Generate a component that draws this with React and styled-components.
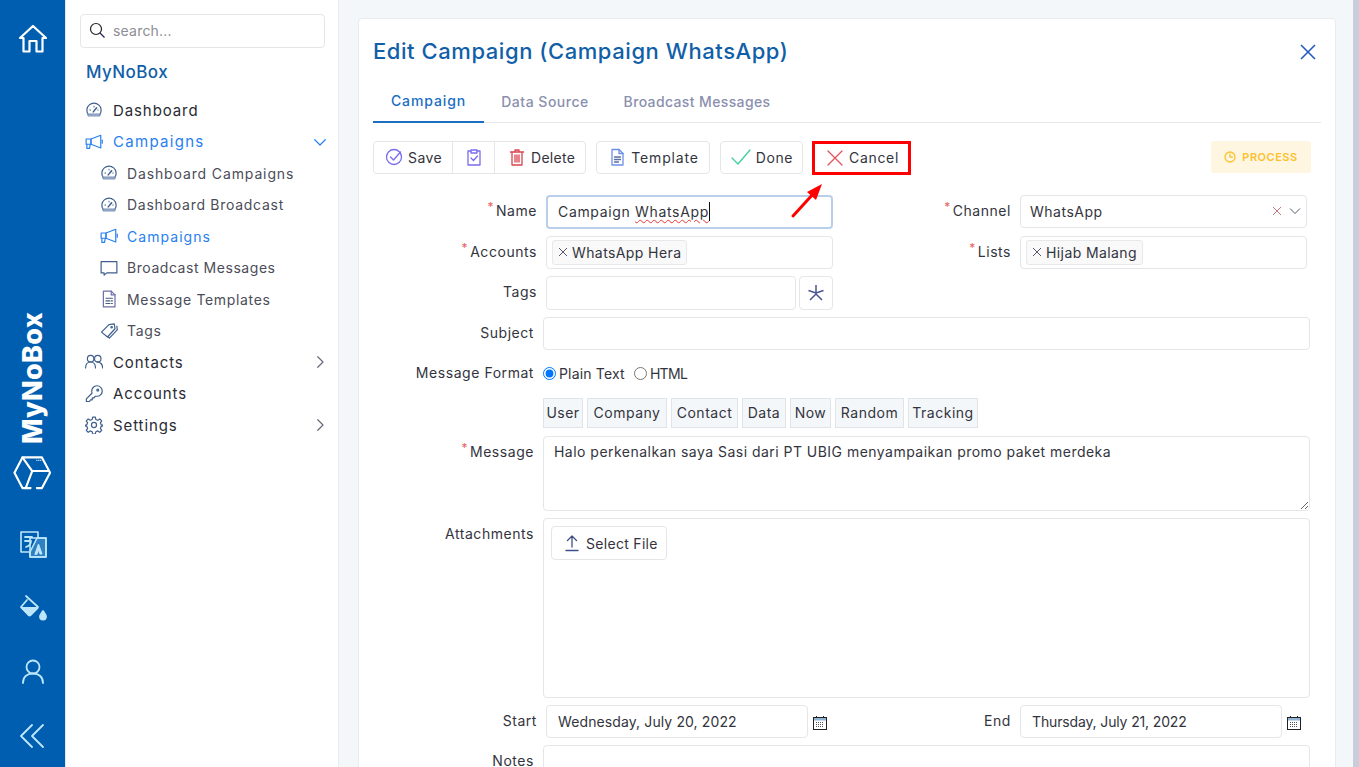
import React from "react";
import styled, { createGlobalStyle } from "styled-components";

const Global = createGlobalStyle`
  html, body { margin: 0; height: 767px; overflow: hidden; }
  body { font-family: Inter, "Open Sans", sans-serif; color: #2c2c33; background: #f4f7fa; }
  * { box-sizing: border-box; }
`;

const Page = styled.div`display: flex; width: 1359px; height: 767px; overflow: hidden;`;

const Rail = styled.nav`
  width: 66px; flex: none; background: #005eb0; border-right: 1px solid #e3e7ec;
  display: flex; flex-direction: column; align-items: center; padding: 23px 0 15px;
`;
const RailBrand = styled.div`
  margin-top: auto; display: flex; flex-direction: column; align-items: center; gap: 11px; margin-bottom: 37px;
`;
const BrandText = styled.div`
  writing-mode: vertical-rl; transform: rotate(180deg); color: #fff; font-weight: 800; font-size: 27px; line-height: 1; letter-spacing: .3px; height: 131px; text-align: left;
`;
const RailTools = styled.div`display: flex; flex-direction: column; align-items: center; gap: 32px;`;
const RailIcon = styled.svg`
  width: ${p => p.$w || 32}px; height: ${p => p.$h || 32}px; display: block; fill: none; stroke: ${p => p.$c || "#bde6fb"}; stroke-width: ${p => p.$sw || 1.8}; stroke-linecap: round; stroke-linejoin: round;
`;

const Side = styled.aside`
  width: 273px; flex: none; background: #fff; padding: 14px 0 0 14px; border-right: 1px solid #e9edf2;
`;
const Search = styled.div`
  height: 34px; border: 1px solid #e4e6e9; border-radius: 4px; display: flex; align-items: center; gap: 7px; padding: 0 0 2px 7px; color: #8d8d93; font-size: 14px; letter-spacing: .2px; width: 245px;
`;
const Brand = styled.div`color: #115fa8; font-size: 17px; font-weight: 500; letter-spacing: .42px; margin: 13px 0 12px 6px; line-height: 22px;`;
const Menu = styled.div`display: flex; flex-direction: column; width: 249px;`;
const Item = styled.div`
  height: 31.5px; display: flex; align-items: center; gap: ${p => p.$sub ? 9 : 10}px; padding-left: ${p => p.$sub ? 20 : 5}px; padding-bottom: 1px;
  font-size: ${p => p.$sub ? 14 : 15}px; letter-spacing: ${p => p.$ls ?? (p.$sub ? .66 : .9)}px; color: ${p => p.$active ? "#2880f0" : p.$sub ? "#4b4d58" : "#2a2b33"}; font-weight: 400;
`;
const ItemIcon = styled.svg`
  width: 18px; height: 18px; flex: none; fill: none; stroke: ${p => p.$c || "#3f5f8c"}; stroke-width: 1.6; stroke-linecap: round; stroke-linejoin: round;
`;
const ItemLabel = styled.span`flex: 1; white-space: nowrap;`;

const Main = styled.main`flex: 1; min-width: 0; padding: 18px 17px 0 19px;`;
const Scrollbar = styled.div`width: 6px; flex: none; background: #c8ced9;`;
const Card = styled.section`
  background: #fff; border: 1px solid #e8ebef; border-radius: 4px; padding: 0 14px; height: 780px;
`;
const TitleRow = styled.header`display: flex; justify-content: space-between; align-items: center; height: 65px; padding: 0 4px 2px 0;`;
const Title = styled.h1`margin: 0; font-size: 22px; line-height: 28px; font-weight: 500; color: #115fa8; letter-spacing: .56px;`;
const CloseIcon = styled.svg`width: 18px; height: 18px; margin-top: 2px; fill: none; stroke: #1f55c4; stroke-width: 1.5;`;
const Tabs = styled.div`display: flex; border-bottom: 1px solid #e6e8eb; height: 39px; width: 948px;`;
const Tab = styled.div`
  width: ${p => p.$w}px; height: 39px; display: flex; align-items: center; justify-content: center; font-size: 14px; font-weight: 500; letter-spacing: ${p => p.$ls}px; padding-bottom: 4px; white-space: nowrap;
  color: ${p => p.$active ? "#1b6ec2" : "#8b8fae"}; border-bottom: ${p => p.$active ? "2px solid #1b6ec2" : "none"};
`;
const Toolbar = styled.div`display: flex; align-items: flex-start; margin-top: 18px; height: 34px; position: relative; width: 938px;`;
const Group = styled.div`display: flex; height: 33px; border: 1px solid #e4e6ea; border-radius: 4px;`;
const GroupBtn = styled.div`
  display: flex; align-items: center; gap: 5px; padding: 0 ${p => p.$pr ?? 10}px 1px ${p => p.$pl ?? 11}px; font-size: 14px; letter-spacing: ${p => p.$ls ?? .4}px; color: #33343d; white-space: nowrap;
  & + & { border-left: 1px solid #e4e6ea; }
`;
const ToolBtn = styled(Group)`margin-left: ${p => p.$ml ?? 10}px;`;
const BtnIcon = styled.svg`
  width: ${p => p.$s || 18}px; height: ${p => p.$s || 18}px; flex: none; fill: none; stroke: ${p => p.$c}; stroke-width: 1.3; stroke-linecap: round; stroke-linejoin: round;
`;
const CancelBtn = styled.div`
  margin-left: 9px; height: 34px; width: 99px; flex: none; border: 3px solid #f00; display: flex; align-items: center; gap: 5px; padding: 0 0 1px 11px; font-size: 14px; letter-spacing: .68px; color: #33343d;
`;
const Status = styled.div`
  margin-left: auto; height: 32px; width: 100px; border-radius: 3px; background: #fff6e1; color: #fcc12f; font-size: 11px; font-weight: 600; letter-spacing: .5px; display: flex; align-items: center; justify-content: center; gap: 6px;
`;
const Arrow = styled.svg`position: absolute; left: 417px; top: 40px; width: 36px; height: 38px; fill: #f00; stroke: #f00;`;

const Form = styled.div`display: flex; flex-direction: column; margin-top: 20px; width: 948px;`;
const Row = styled.div`
  display: grid; align-items: start; margin-bottom: ${p => p.$mb ?? 7}px;
  grid-template-columns: ${p => p.$wide ? "170px 767px" : "173px 287px 187px 287px"};
`;
const Label = styled.label`
  text-align: right; padding-right: 9px; font-size: 14px; letter-spacing: .55px; color: #33343d; line-height: 20px; padding-top: ${p => p.$pt ?? 6}px; white-space: nowrap;
`;
const Req = styled.sup`color: #e8605f; font-size: 12px; line-height: 0; margin-right: 2px; position: relative; top: 1px; vertical-align: super;`;
const Box = styled.div`
  height: ${p => p.$h || 33}px; width: ${p => p.$w ? p.$w + "px" : "auto"}; border: 1px solid #e4e6ea; border-radius: 4px; background: #fff; display: flex; align-items: center; font-size: 14px; letter-spacing: ${p => p.$ls ?? .5}px; color: #33343d; padding: 0 ${p => p.$pr ?? p.$px ?? 9}px 1px ${p => p.$px ?? 9}px; flex: ${p => p.$w ? "none" : 1}; min-width: 0; white-space: nowrap;
`;
const Focused = styled(Box)`height: 34px; border: 2px solid #b9cfe9; padding-left: 10px; letter-spacing: .66px;`;
const Caret = styled.span`display: inline-block; width: 1px; height: 19px; background: #111;`;
const Squiggle = styled.span`text-decoration: underline wavy #e33 1px; text-underline-offset: 2px;`;
const Chip = styled.div`
  height: 25px; background: #f9f9f9; border: 1px solid #e8e8ea; border-radius: 3px; display: flex; align-items: center; gap: 3px; padding: 0 5px 0 4px; font-size: 14px; letter-spacing: .4px;
`;
const SmallX = styled.svg`width: 12px; height: 12px; flex: none; fill: none; stroke: ${p => p.$c || "#55586a"}; stroke-width: 1;`;
const Spacer = styled.span`flex: 1;`;
const IconGap = styled.span`width: 6px; flex: none;`;
const Split = styled.div`display: flex; gap: 3px; align-items: flex-start;`;
const Square = styled(Box)`flex: none; width: 34px; height: 34px; padding: 0; justify-content: center;`;
const Radios = styled.div`display: flex; align-items: center; height: 20px; font-size: 14px; letter-spacing: .18px; color: #33343d;`;
const Radio = styled.input`margin: 0 3px 0 0; width: 13px; height: 13px;`;
const RadioText = styled.span`margin-right: 9px; letter-spacing: ${p => p.$ls ?? .18}px;`;
const Tokens = styled.div`display: flex; gap: 4px;`;
const Token = styled.div`width: ${p => p.$w}px; height: 30px; background: #f4f7fa; border: 1px solid #e0e3e8; display: flex; align-items: center; justify-content: center; padding-bottom: 1px; font-size: 14px; letter-spacing: .5px; color: #33343d; white-space: nowrap;`;
const MessageArea = styled.textarea`
  display: block; width: 767px; height: 75px; border: 1px solid #e4e6ea; border-radius: 4px; padding: 5px 10px; font: 14px/20px Inter, sans-serif; letter-spacing: .47px; color: #33343d; outline: none; background: #fff;
`;
const Attach = styled.div`width: 767px; height: 180px; border: 1px solid #e4e6ea; border-radius: 4px; padding: 7px;`;
const FileBtn = styled.div`width: 116px; height: 34px; border: 1px solid #e4e6ea; border-radius: 4px; display: flex; align-items: center; gap: 5px; padding: 0 0 0 11px; font-size: 14px; letter-spacing: .3px; color: #33343d;`;
const DateCell = styled.div`display: flex; align-items: center; gap: 4px;`;
const CalIcon = styled.svg`width: 16px; height: 16px; flex: none; margin-top: 2px;`;

const gauge = <>
  <path d="M4 17.500a9.500 9.500 0 1 1 16 0"/>
  <path d="M3.500 17.500h17l-1 2.500h-15z" fill="#a9bad4" stroke="#7d93b8"/>
  <path d="M11 14.500 15.500 9" strokeWidth="2"/>
  <path d="M6.500 12h1M12 7v1M17 12h.6" strokeWidth="1.300"/>
</>;
const mega = <>
  <path d="M8 8 21 3v17L8 15z"/>
  <path d="M1.500 8H8v7H1.500z"/>
  <path d="M2.500 15v5.500H6l1-5.500"/>
  <path d="M23 9.500v4"/>
</>;
const msg = <path d="M1.500 3.500h21v15H9l-3.500 3v-3h-4z"/>;
const doc = <>
  <path d="M4.500 1.500H15l5 5v16H4.500z" stroke="#6e6ea8"/>
  <path d="M15 1.500v5h5" stroke="#6e6ea8"/>
  <path d="M8 11h8.500M8 14.500h5M15 14.500h1.500M8 18h5M15 18h1.500" stroke="#4a5c86"/>
</>;
const tag = <>
  <path d="M2 13.500 12 3.500l7-1 1 6.500L10 20z"/>
  <circle cx="15.500" cy="7" r="1"/>
  <path d="M22.500 5.500l.5 5-10.500 11-1.800-1.800"/>
</>;
const users = <>
  <circle cx="7.500" cy="7.500" r="4.300"/>
  <circle cx="17" cy="7.500" r="4.300"/>
  <path d="M.8 20c0-5 2.800-8 6.700-8s6.500 3 6.500 8M16 12.200c4.500-.7 7.500 3 7.500 7.800"/>
</>;
const key = <>
  <path d="M9 8.500a7 7 0 1 1 6.500 6.500l-2 .2-1.500 2h-2.300v2.500H7.500L6 22H1.800v-3.500L9.300 11z"/>
  <circle cx="17" cy="6.800" r="1.300"/>
</>;
const gear = <>
  <circle cx="12" cy="12" r="3.400"/>
  <path d="M10.200 1.500h3.600l.6 3.100 2.700 1.100 2.600-1.800 2.600 2.600-1.800 2.600 1.100 2.700 3.100.6v.8l-3.100.6-1.100 2.700 1.800 2.600-2.600 2.600-2.600-1.800-2.700 1.100-.6 3.100h-3.600l-.6-3.100-2.700-1.100-2.600 1.800-2.600-2.600 1.800-2.600-1.100-2.700-3.100-.6v-.8l3.100-.6 1.100-2.700-1.800-2.600 2.600-2.600 2.600 1.800 2.700-1.100z"/>
</>;

const MenuRow = ({ icon, children, sub, active, chev, c, ls }) => (
  <Item $sub={sub} $active={active} $ls={ls}>
    <ItemIcon viewBox="0 0 24 24" $c={c}>{icon}</ItemIcon>
    <ItemLabel>{children}</ItemLabel>
    {chev === "right" && <ItemIcon viewBox="0 0 24 24" $c="#66697a"><path d="m9 5 7 7-7 7"/></ItemIcon>}
    {chev === "down" && <ItemIcon viewBox="0 0 24 24" $c="#2880f0"><path d="m5 9 7 7 7-7"/></ItemIcon>}
  </Item>
);

const X = ({ c }) => <SmallX viewBox="0 0 12 12" $c={c}><path d="m2 2 8 8M10 2l-8 8"/></SmallX>;
const Chevron = () => <SmallX viewBox="0 0 12 12"><path d="m1 3.500 5 5 5-5"/></SmallX>;
const Cal = () => (
  <CalIcon viewBox="0 0 16 16">
    <rect x="1.500" y="2.500" width="13" height="12" fill="#fff" stroke="#222"/>
    <rect x="2" y="3" width="12" height="2.500" fill="#8fb4d8"/>
    <path d="M4.500 1v2M11.500 1v2" stroke="#222"/>
    <path d="M4 7.500h8M4 9.500h8M4 11.500h8" stroke="#555" strokeDasharray="1 1"/>
  </CalIcon>
);

const tokens = [["User", 40], ["Company", 80], ["Contact", 67], ["Data", 44], ["Now", 41], ["Random", 69], ["Tracking", 70]];

export default function App() {
  return (
    <Page>
      <Global />
      <Rail>
        <RailIcon viewBox="0 0 32 32" $c="#fff" $sw={2.2}>
          <path d="M3 15 16 3l13 12h-3.500v13.500h-6V18h-7v10.500h-6V15z"/>
        </RailIcon>
        <RailBrand>
          <BrandText>MyNoBox</BrandText>
          <RailIcon viewBox="0 0 40 36" $c="#fff" $sw={2.2} $w={39} $h={36}>
            <path d="M24.500 33.500h5.200L38 17.700 29.700 2H9.700L1.500 17.700 9.700 33.500H18"/>
            <path d="M9.700 2 19.700 16H36M19.700 16 13 33.500"/>
            <path d="M24 5h5" strokeWidth="1.200" strokeDasharray="1 1" strokeLinecap="butt"/>
          </RailIcon>
        </RailBrand>
        <RailTools>
          <RailIcon viewBox="0 0 32 32" $sw={1.6}>
            <path d="M4 4h17v20H4z"/>
            <path d="M13 10h16v19H13z" fill="#005eb0"/>
            <path d="M13 24 20 10h9v19H13z" fill="#bde6fb" stroke="#bde6fb" fillOpacity=".25"/>
            <path d="M8 9h7M8 13h6c0 3-2 5-5 6" strokeWidth="1.800"/>
            <path d="M18 26l3.500-10L25 26h-2l-1.500-4-1.500 4z" fill="#bde6fb" stroke="#bde6fb" strokeWidth="1"/>
          </RailIcon>
          <RailIcon viewBox="0 0 32 32">
            <path d="M9 4 21 15l-7.500 7.500a1.500 1.500 0 0 1-2 0L4 15l6-7"/>
            <path d="M5 16h15.500l-7 7a1.500 1.500 0 0 1-2 0z" fill="#bde6fb"/>
            <path d="M26 19c2 3 3 4 3 5.500a3 3 0 0 1-6 0c0-1.500 1-2.500 3-5.500z" fill="#bde6fb"/>
          </RailIcon>
          <RailIcon viewBox="0 0 32 32">
            <circle cx="16" cy="11" r="6.500"/><path d="M6 27c0-6 4-9.500 10-9.500S26 21 26 27"/>
          </RailIcon>
          <RailIcon viewBox="0 0 32 32">
            <path d="M15 5 4 16l11 11M26 5 15 16l11 11"/>
          </RailIcon>
        </RailTools>
      </Rail>

      <Side>
        <Search>
          <svg width="18" height="18" viewBox="0 0 18 18" fill="none" stroke="#222" strokeWidth="1.200"><circle cx="8" cy="8" r="5.500"/><path d="m12 12 4.500 4.500" stroke="#225"/></svg>
          search...
        </Search>
        <Brand>MyNoBox</Brand>
        <Menu>
          <MenuRow icon={gauge}>Dashboard</MenuRow>
          <MenuRow icon={mega} c="#2880f0" active chev="down" ls={1.3}>Campaigns</MenuRow>
          <MenuRow sub icon={gauge} ls={.87}>Dashboard Campaigns</MenuRow>
          <MenuRow sub icon={gauge} ls={.72}>Dashboard Broadcast</MenuRow>
          <MenuRow sub icon={mega} c="#2880f0" active ls={1.05}>Campaigns</MenuRow>
          <MenuRow sub icon={msg} ls={.55}>Broadcast Messages</MenuRow>
          <MenuRow sub icon={doc}>Message Templates</MenuRow>
          <MenuRow sub icon={tag}>Tags</MenuRow>
          <MenuRow icon={users} chev="right">Contacts</MenuRow>
          <MenuRow icon={key}>Accounts</MenuRow>
          <MenuRow icon={gear} chev="right">Settings</MenuRow>
        </Menu>
      </Side>

      <Main>
        <Card>
          <TitleRow>
            <Title>Edit Campaign (Campaign WhatsApp)</Title>
            <CloseIcon viewBox="0 0 18 18"><path d="m2 2 14 14M16 2 2 16"/></CloseIcon>
          </TitleRow>
          <Tabs>
            <Tab $active $w={111} $ls={.9}>Campaign</Tab>
            <Tab $w={122} $ls={.5}>Data Source</Tab>
            <Tab $w={182} $ls={.37}>Broadcast Messages</Tab>
          </Tabs>
          <Toolbar>
            <Group>
              <GroupBtn>
                <BtnIcon viewBox="0 0 18 18" $c="#7a6cf0"><circle cx="9" cy="9" r="7.500"/><path d="m5.500 9 3 3 7-8"/></BtnIcon>Save
              </GroupBtn>
              <GroupBtn $pl={12} $pr={11}>
                <BtnIcon viewBox="0 0 18 18" $c="#7a6cf0"><path d="M6 3H3v14h12V3h-3"/><path d="M6 2h6v3H6z"/><path d="m6 10 2.500 2.500L12.500 8"/></BtnIcon>
              </GroupBtn>
              <GroupBtn $pl={13} $pr={10} $ls={.3}>
                <BtnIcon viewBox="0 0 18 18" $c="#d9434e"><path d="M2.500 4h13M7 4V2h4v2M4 4v13h10V4"/><path d="M7 7v7M9 7v7M11 7v7"/></BtnIcon>Delete
              </GroupBtn>
            </Group>
            <ToolBtn>
              <GroupBtn $pl={11} $ls={.85}>
                <BtnIcon viewBox="0 0 18 18" $c="#6c8fe8"><path d="M4 1.500h7l4 4V17H4z"/><path d="M11 1.500v4h4"/><path d="M6.500 9h6M6.500 11.500h6M6.500 14h4" stroke="#5a6ea0"/></BtnIcon>Template
              </GroupBtn>
            </ToolBtn>
            <ToolBtn>
              <GroupBtn $pl={10} $pr={9} $ls={.55}>
                <BtnIcon viewBox="0 0 20 18" $s={20} $c="#3ccf9c"><path d="m1 10 6 6L19 2"/></BtnIcon>Done
              </GroupBtn>
            </ToolBtn>
            <CancelBtn>
              <BtnIcon viewBox="0 0 18 18" $c="#e2525a"><path d="m2 2 14 14M16 2 2 16"/></BtnIcon>Cancel
            </CancelBtn>
            <Status>
              <BtnIcon viewBox="0 0 12 12" $s={12} $c="#fcc12f"><circle cx="6" cy="6" r="5"/><path d="M6 3v3h2.500"/></BtnIcon>PROCESS
            </Status>
            <Arrow viewBox="0 0 36 38">
              <path d="M3 35 24 12" strokeWidth="3" strokeLinecap="round"/>
              <path d="M32 3 26 19 17 11z" strokeWidth="0"/>
            </Arrow>
          </Toolbar>

          <Form>
            <Row>
              <Label $pt={6}><Req>*</Req>Name</Label>
              <Focused>Campaign&nbsp;<Squiggle>WhatsApp</Squiggle><Caret /></Focused>
              <Label $pt={6}><Req>*</Req>Channel</Label>
              <Box $pr={5}>WhatsApp<Spacer /><X c="#c4767d" /><IconGap /><Chevron /></Box>
            </Row>
            <Row>
              <Label><Req>*</Req>Accounts</Label>
              <Box $px={5}><Chip><X />WhatsApp Hera</Chip></Box>
              <Label><Req>*</Req>Lists</Label>
              <Box $px={5}><Chip><X />Hijab Malang</Chip></Box>
            </Row>
            <Row>
              <Label>Tags</Label>
              <Split>
                <Box $h={34} />
                <Square>
                  <svg width="20" height="20" viewBox="0 0 20 20" fill="none" stroke="#4d5394" strokeWidth="1.500"><path d="M10 2v9M10 11l-6 6M10 11l6 6M2.500 7.500 10 10M17.500 7.500 10 10"/></svg>
                </Square>
              </Split>
            </Row>
            <Row $wide $mb={13}>
              <Label>Subject</Label>
              <Box />
            </Row>
            <Row $wide $mb={15}>
              <Label $pt={0}>Message Format</Label>
              <Radios>
                <Radio type="radio" name="fmt" defaultChecked />
                <RadioText>Plain Text</RadioText>
                <Radio type="radio" name="fmt" />
                <RadioText $ls={-.7}>HTML</RadioText>
              </Radios>
            </Row>
            <Row $wide $mb={8}>
              <span />
              <Tokens>
                {tokens.map(([t, w]) => <Token key={t} $w={w}>{t}</Token>)}
              </Tokens>
            </Row>
            <Row $wide>
              <Label><Req>*</Req>Message</Label>
              <MessageArea readOnly spellCheck={false} value="Halo perkenalkan saya Sasi dari PT UBIG menyampaikan promo paket merdeka" />
            </Row>
            <Row $wide>
              <Label>Attachments</Label>
              <Attach>
                <FileBtn>
                  <BtnIcon viewBox="0 0 18 18" $c="#3f4f8c"><path d="M9 13V2M4.500 6.500 9 2l4.500 4.500M3 16.500h12"/></BtnIcon>Select File
                </FileBtn>
              </Attach>
            </Row>
            <Row>
              <Label>Start</Label>
              <DateCell><Box $w={262} $px={11} $ls={.11}>Wednesday, July 20, 2022</Box><Cal /></DateCell>
              <Label>End</Label>
              <DateCell><Box $w={262} $px={11} $ls={-.14}>Thursday, July 21, 2022</Box><Cal /></DateCell>
            </Row>
            <Row $wide $mb={0}>
              <Label>Notes</Label>
              <Box $h={60} />
            </Row>
          </Form>
        </Card>
      </Main>
      <Scrollbar />
    </Page>
  );
}
